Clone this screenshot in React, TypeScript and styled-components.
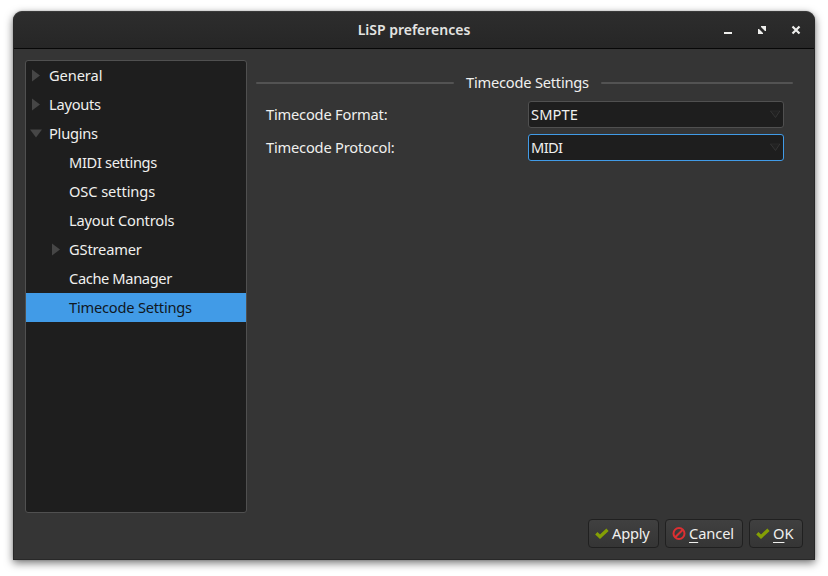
import React from 'react';
import styled, { createGlobalStyle } from 'styled-components';

const GlobalStyle = createGlobalStyle`
  * { box-sizing: border-box; }
  html, body { margin: 0; background: #fff; overflow: hidden; }
  body { font: 400 14.67px/20px "Noto Sans", sans-serif; color: #f0f0ee; }
`;

const Desktop = styled.div`
  width: 828px;
  height: 576px;
  padding: 11px 13px 16px;
  background: #fff;
`;

const Window = styled.main`
  display: flex;
  flex-direction: column;
  width: 802px;
  height: 549px;
  background: #353535;
  border: 1px solid #282828;
  border-top-color: #3a3a3a;
  border-radius: 9px 9px 0 0;
  overflow: hidden;
  box-shadow: 0 3px 9px rgba(0, 0, 0, 0.55), 0 0 2px rgba(0, 0, 0, 0.2);
`;

const TitleBar = styled.header`
  display: grid;
  grid-template-columns: 1fr auto 1fr;
  align-items: center;
  height: 37px;
  flex: none;
  background: linear-gradient(#2d2d2d, #262626);
  border-bottom: 1px solid #070707;
`;

const Title = styled.h1`
  grid-column: 2;
  margin: 0;
  font-size: 14px;
  line-height: 20px;
  font-weight: 600;
  color: #e4e4e2;
  white-space: nowrap;
`;

const WindowControls = styled.div`
  display: flex;
  justify-content: flex-end;
  gap: 24px;
  padding-right: 13px;
`;

const ControlIcon = styled.svg`
  display: block;
  width: 10px;
  height: 10px;
`;

const Body = styled.div`
  display: flex;
  gap: 9px;
  height: 464px;
  padding: 11px 11px 0;
`;

const Tree = styled.nav`
  width: 222px;
  height: 453px;
  flex: none;
  background: #1e1e1e;
  border: 1px solid #505050;
  border-radius: 3px;
`;

const TreeRow = styled.div<{ $level: number; $selected?: boolean }>`
  display: flex;
  align-items: center;
  height: 29px;
  padding-left: ${p => 3 + p.$level * 20}px;
  color: ${p => (p.$selected ? '#10181f' : 'inherit')};
  background: ${p => (p.$selected ? '#419be7' : 'transparent')};
`;

const Arrow = styled.svg`
  width: 14px;
  height: 14px;
  margin-right: 6px;
  fill: #464646;
`;

const Label = styled.span<{ $tracking?: number }>`
  white-space: nowrap;
  letter-spacing: ${p => p.$tracking ?? 0}px;
  padding-bottom: 2px;
`;

const Panel = styled.section`
  display: flex;
  flex-direction: column;
  width: 537px;
  padding-top: 12px;
`;

const Legend = styled.div`
  display: flex;
  align-items: center;
  gap: 12px;
  height: 20px;
`;

const Rule = styled.span<{ $width: number }>`
  width: ${p => p.$width}px;
  flex: none;
  height: 2px;
  margin-top: 2px;
  background: #535353;
  border-radius: 1px;
`;

const LegendText = styled.span`
  width: 123px;
  white-space: nowrap;
  letter-spacing: -0.22px;
`;

const Fields = styled.div`
  display: grid;
  grid-template-columns: 262px 256px;
  row-gap: 6px;
  padding: 9px 0 0 10px;
`;

const FieldLabel = styled.label`
  line-height: 27px;
  letter-spacing: -0.2px;
`;

const Combo = styled.div<{ $focused?: boolean }>`
  display: flex;
  align-items: center;
  justify-content: space-between;
  height: 27px;
  padding: 0 2px;
  background: #1e1e1e;
  border: 1px solid ${p => (p.$focused ? '#419be7' : '#505050')};
  border-radius: 3px;
`;

const ComboArrow = styled.svg`
  width: 12px;
  height: 9px;
`;

const Actions = styled.footer`
  display: flex;
  justify-content: flex-end;
  gap: 6px;
  padding: 6px 11px 0;
`;

const Button = styled.button<{ $width: number }>`
  display: flex;
  align-items: center;
  gap: 3px;
  width: ${p => p.$width}px;
  height: 29px;
  padding: 0 0 0 6px;
  font: inherit;
  color: inherit;
  background: linear-gradient(#404040, #353535);
  border: 1px solid #202020;
  border-radius: 4px;
`;

const ButtonIcon = styled.svg`
  width: 14px;
  height: 14px;
  flex: none;
`;

const Mnemonic = styled.span`
  text-decoration: underline;
  text-decoration-thickness: 1px;
  text-underline-offset: 3px;
  text-decoration-skip-ink: none;
`;

const Check = () => (
  <ButtonIcon viewBox="0 0 14 14">
    <path d="M1.300 6.300 5 9.800 12.500 2.800" fill="none" stroke="#849f05" strokeWidth="3.300" />
  </ButtonIcon>
);

const Forbidden = () => (
  <ButtonIcon viewBox="0 0 14 14">
    <g fill="none" stroke="#dc2f32" strokeWidth="2">
      <circle cx="7" cy="6.500" r="5.500" />
      <path d="M3.200 10.300 10.800 2.700" />
    </g>
  </ButtonIcon>
);

type Item = {
  text: string;
  level: number;
  tracking: number;
  arrow?: 'closed' | 'open';
  selected?: boolean;
};

const items: Item[] = [
  { text: 'General', level: 0, tracking: -0.1, arrow: 'closed' },
  { text: 'Layouts', level: 0, tracking: -0.25, arrow: 'closed' },
  { text: 'Plugins', level: 0, tracking: -0.25, arrow: 'open' },
  { text: 'MIDI settings', level: 1, tracking: -0.35 },
  { text: 'OSC settings', level: 1, tracking: -0.1 },
  { text: 'Layout Controls', level: 1, tracking: -0.2 },
  { text: 'GStreamer', level: 1, tracking: -0.17, arrow: 'closed' },
  { text: 'Cache Manager', level: 1, tracking: -0.38 },
  { text: 'Timecode Settings', level: 1, tracking: -0.22, selected: true },
];

const fields = [
  { label: 'Timecode Format:', value: 'SMPTE', tracking: 0.1, focused: false },
  { label: 'Timecode Protocol:', value: 'MIDI', tracking: -0.65, focused: true },
];

export default function App() {
  return (
    <Desktop>
      <GlobalStyle />
      <Window>
        <TitleBar>
          <Title>LiSP preferences</Title>
          <WindowControls>
            <ControlIcon viewBox="0 0 10 10" fill="#eeeeec">
              <path d="M1 7h8v2H1z" />
            </ControlIcon>
            <ControlIcon viewBox="0 0 10 10" fill="#eeeeec">
              <path d="M4 1h5v5H8L6.500 4.500 5.500 3.500 4 2z M1 4h1l1.500 1.500 1 1L6 8v1H1z" />
            </ControlIcon>
            <ControlIcon viewBox="0 0 10 10" fill="none" stroke="#eeeeec" strokeWidth="2.2">
              <path d="M1.500 1.500 8.500 8.500M8.500 1.500 1.500 8.500" />
            </ControlIcon>
          </WindowControls>
        </TitleBar>
        <Body>
          <Tree>
            {items.map(item => (
              <TreeRow key={item.text} $level={item.level} $selected={item.selected}>
                <Arrow viewBox="0 0 14 14">
                  {item.arrow === 'closed' && <path d="M3 .5v12l8-6z" />}
                  {item.arrow === 'open' && <path d="M1 2.500h12l-6 8z" />}
                </Arrow>
                <Label $tracking={item.tracking}>{item.text}</Label>
              </TreeRow>
            ))}
          </Tree>
          <Panel>
            <Legend>
              <Rule $width={198} />
              <LegendText>Timecode Settings</LegendText>
              <Rule $width={192} />
            </Legend>
            <Fields>
              {fields.map(field => (
                <React.Fragment key={field.label}>
                  <FieldLabel>{field.label}</FieldLabel>
                  <Combo $focused={field.focused}>
                    <Label $tracking={field.tracking}>{field.value}</Label>
                    <ComboArrow viewBox="0 0 12 9">
                      <path d="M1 1h10L6.500 7.500z" fill="#222" />
                      <path d="M1 1h10" fill="none" stroke="#292929" />
                      <path d="M10.800 1 6.500 7.500 1.500 1" fill="none" stroke="#353535" />
                    </ComboArrow>
                  </Combo>
                </React.Fragment>
              ))}
            </Fields>
          </Panel>
        </Body>
        <Actions>
          <Button $width={71}>
            <Check />
            <Label $tracking={-0.2}>Apply</Label>
          </Button>
          <Button $width={78}>
            <Forbidden />
            <Label $tracking={-0.1}><Mnemonic>C</Mnemonic>ancel</Label>
          </Button>
          <Button $width={54}>
            <Check />
            <Label><Mnemonic>O</Mnemonic>K</Label>
          </Button>
        </Actions>
      </Window>
    </Desktop>
  );
}
